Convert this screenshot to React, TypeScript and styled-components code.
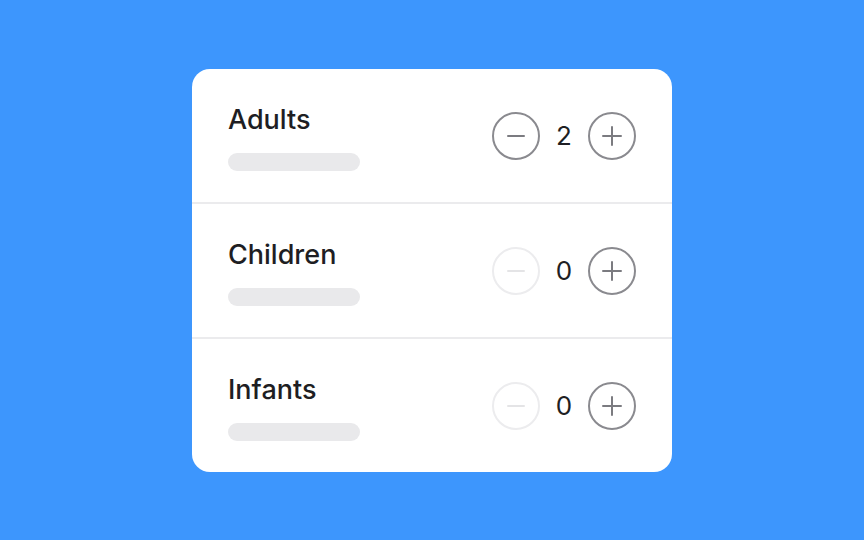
import styled, { createGlobalStyle } from 'styled-components';
import { useState } from 'react';

const GlobalStyle = createGlobalStyle`
  html, body {
    margin: 0;
    padding: 0;
  }

  body {
    font-family: Inter, 'Noto Sans', 'Liberation Sans', sans-serif;
    background: #3d96fd;
  }
`;

const Page = styled.div`
  display: flex;
  align-items: center;
  justify-content: center;
  width: 100%;
  height: 100vh;
`;

const Card = styled.div`
  width: 480px;
  border-radius: 18px;
  background: #fff;
  overflow: hidden;
`;

const Row = styled.div`
  display: flex;
  align-items: center;
  justify-content: space-between;
  padding: 36px 36px 31px;

  & + & {
    border-top: 2px solid #ebebed;
  }
`;

const Info = styled.div`
  display: flex;
  flex-direction: column;
  gap: 18px;
`;

const Title = styled.h3`
  margin: 0;
  font-size: 27px;
  font-weight: 500;
  line-height: 30px;
  color: #1e1e23;
`;

const Placeholder = styled.div`
  width: 132px;
  height: 18px;
  border-radius: 9px;
  background: #e9e9eb;
`;

const Counter = styled.div`
  display: flex;
  align-items: center;
  margin-top: -4px;
`;

const RoundButton = styled.button<{ $disabled?: boolean }>`
  display: flex;
  align-items: center;
  justify-content: center;
  box-sizing: border-box;
  width: 48px;
  height: 48px;
  padding: 0;
  border-radius: 50%;
  border: 2.5px solid ${p => (p.$disabled ? '#ececee' : '#8a8a8f')};
  background: #fff;
  color: ${p => (p.$disabled ? '#e4e4e6' : '#7b7b80')};
  cursor: ${p => (p.$disabled ? 'default' : 'pointer')};
`;

const Count = styled.span`
  width: 48px;
  text-align: center;
  font-size: 26px;
  font-weight: 400;
  color: #1e1e23;
`;

const MinusIcon = () => (
  <svg width="20" height="20" viewBox="0 0 20 20" fill="none">
    <path d="M2 10h16" stroke="currentColor" strokeWidth="2" strokeLinecap="round" />
  </svg>
);

const PlusIcon = () => (
  <svg width="20" height="20" viewBox="0 0 20 20" fill="none">
    <path d="M1 10h18M10 1v18" stroke="currentColor" strokeWidth="2" strokeLinecap="round" />
  </svg>
);

const initial = [
  { label: 'Adults', value: 2, min: 1 },
  { label: 'Children', value: 0, min: 0 },
  { label: 'Infants', value: 0, min: 0 },
];

const App: React.FC = () => {
  const [counts, setCounts] = useState(initial.map(i => i.value));

  const change = (index: number, delta: number) => {
    setCounts(prev =>
      prev.map((v, i) => (i === index ? Math.max(initial[i].min, v + delta) : v))
    );
  };

  return (
    <>
      <GlobalStyle />
      <Page>
        <Card>
          {initial.map((item, i) => {
            const atMin = counts[i] <= 0;
            return (
              <Row key={item.label}>
                <Info>
                  <Title>{item.label}</Title>
                  <Placeholder />
                </Info>
                <Counter>
                  <RoundButton $disabled={atMin} onClick={() => change(i, -1)}>
                    <MinusIcon />
                  </RoundButton>
                  <Count>{counts[i]}</Count>
                  <RoundButton onClick={() => change(i, 1)}>
                    <PlusIcon />
                  </RoundButton>
                </Counter>
              </Row>
            );
          })}
        </Card>
      </Page>
    </>
  );
};

export default App;
